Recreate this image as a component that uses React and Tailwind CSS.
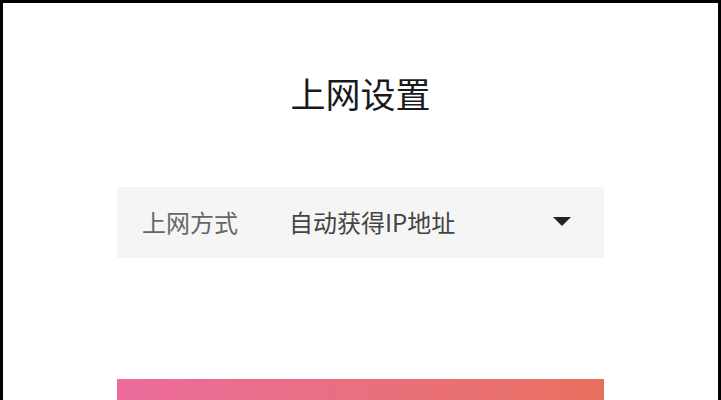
import React from "react";

export default function App() {
  return (
    <div
      className="h-[400px] w-[721px] overflow-hidden border-[3px] border-b-0 border-black bg-white"
      style={{ fontFamily: '"Noto Sans CJK SC", "Noto Sans", sans-serif' }}
    >
      <div className="flex flex-col items-center">
        {/* title */}
        <h1 className="mt-[68px] text-[35px] leading-[44px] font-normal text-[#1a1a1a]">
          上网设置
        </h1>

        {/* select row */}
        <div className="mt-[72px] flex h-[71px] w-[487px] items-center bg-[#f5f5f5] pb-[2px] pl-[25px] pr-[33px]">
          <span className="w-[147px] text-[24px] text-[#666666]">上网方式</span>
          <span className="flex-1 text-[24px] text-[#444444]">自动获得IP地址</span>
          <svg width="18" height="9" viewBox="0 0 18 9" className="shrink-0">
            <path d="M0 0 H18 L9 9 Z" fill="#222222" />
          </svg>
        </div>

        {/* button */}
        <button className="mt-[121px] h-[60px] w-[487px] bg-gradient-to-r from-[#ec6b9c] to-[#e8715e]" />
      </div>
    </div>
  );
}
